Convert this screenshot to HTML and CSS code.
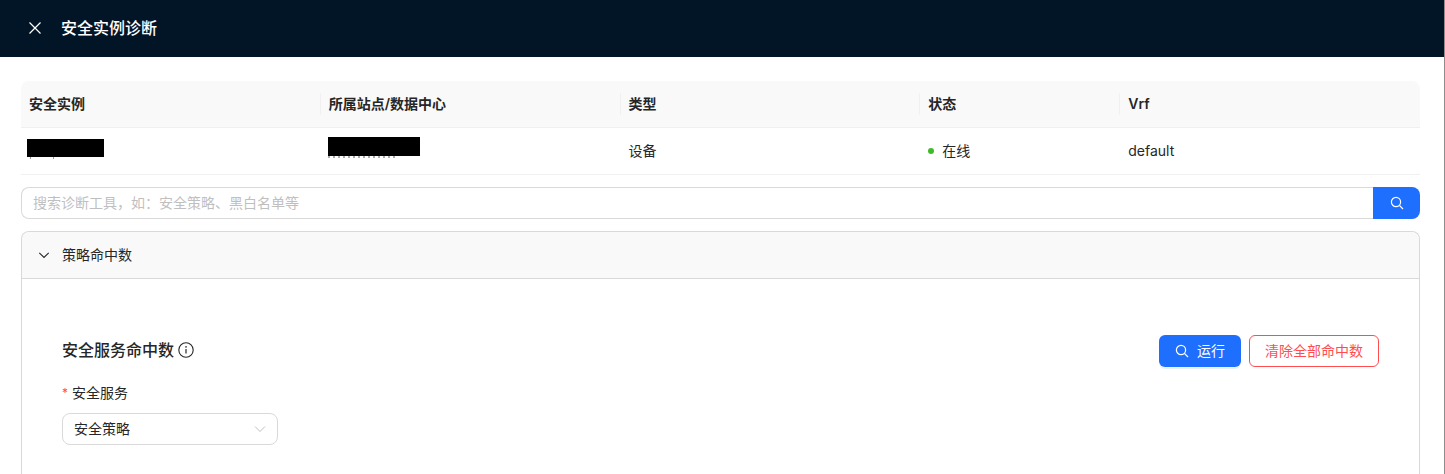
FILE: index.html
```html
<!DOCTYPE html>
<html lang="zh-CN">
<head>
<meta charset="utf-8">
<title>安全实例诊断</title>
<link rel="stylesheet" href="styles.css">
</head>
<body>
<header class="topbar">
  <svg class="close-icon" width="14" height="14" viewBox="0 0 14 14"><path d="M1.5 1.5 12.5 12.5M12.5 1.5 1.5 12.5" stroke="#fff" stroke-width="1.2" fill="none"/></svg>
  <h1 class="topbar-title">安全实例诊断</h1>
</header>
<main class="content">
  <section class="table">
    <div class="row head">
      <div class="cell">安全实例</div>
      <div class="cell sep">所属站点/数据中心</div>
      <div class="cell sep">类型</div>
      <div class="cell sep">状态</div>
      <div class="cell sep">Vrf</div>
    </div>
    <div class="row body-row">
      <div class="cell"><span class="mask mask-a"></span></div>
      <div class="cell"><span class="mask mask-b"></span></div>
      <div class="cell">设备</div>
      <div class="cell status"><span class="dot"></span>在线</div>
      <div class="cell">default</div>
    </div>
  </section>
  <form class="search">
    <div class="search-input">搜索诊断工具，如：安全策略、黑白名单等</div>
    <button type="button" class="search-btn">
      <svg width="14" height="14" viewBox="0 0 14 14"><circle cx="6" cy="6" r="4.6" stroke="#fff" stroke-width="1.2" fill="none"/><path d="M9.4 9.4 13 13" stroke="#fff" stroke-width="1.2" fill="none"/></svg>
    </button>
  </form>
  <section class="panel">
    <div class="panel-head">
      <svg class="chevron" width="12" height="12" viewBox="0 0 12 12"><path d="M1.3 3.8 6 8.5 10.7 3.8" stroke="#262626" stroke-width="1.1" fill="none"/></svg>
      <span>策略命中数</span>
    </div>
    <div class="panel-body">
      <div class="title-row">
        <div class="title">
          <h2>安全服务命中数</h2>
          <svg width="16" height="16" viewBox="0 0 16 16"><circle cx="8" cy="8" r="7.2" stroke="#262626" stroke-width="1.1" fill="none"/><path d="M8 7v4.6" stroke="#262626" stroke-width="1.2"/><circle cx="8" cy="4.9" r=".8" fill="#262626"/></svg>
        </div>
        <div class="actions">
          <button type="button" class="btn primary">
            <svg width="14" height="14" viewBox="0 0 14 14"><circle cx="6" cy="6" r="4.6" stroke="#fff" stroke-width="1.2" fill="none"/><path d="M9.4 9.4 13 13" stroke="#fff" stroke-width="1.2" fill="none"/></svg>
            运行
          </button>
          <button type="button" class="btn danger">清除全部命中数</button>
        </div>
      </div>
      <div class="field">
        <label class="label"><span class="star">*</span>安全服务</label>
        <div class="select">
          <span>安全策略</span>
          <svg width="12" height="12" viewBox="0 0 12 12"><path d="M1 3.5 6 8.5 11 3.5" stroke="#bfbfbf" stroke-width="1" fill="none"/></svg>
        </div>
      </div>
    </div>
  </section>
</main>
</body>
</html>
```
FILE: styles.css
```css
* { box-sizing: border-box; }
html, body { margin: 0; height: 100%; overflow: hidden; }
body {
  background: #fff;
  border-right: 1px solid #8c8c8c;
  color: #262626;
  font-family: Inter, "Noto Sans CJK SC", sans-serif;
  font-size: 14px;
  line-height: 22px;
}
.topbar {
  height: 57px;
  background: #021526;
  display: flex;
  align-items: center;
  padding: 0 0 2px 28px;
  gap: 19px;
}
.topbar-title { margin: 0; color: #fff; font-size: 16px; font-weight: 500; }
.content { padding: 24px 24px 0 21px; }
.table { margin-bottom: 12px; }
.row { display: grid; grid-template-columns: 3fr 3fr 3fr 2fr 3fr; }
.head {
  height: 47px;
  background: #f9f9f9;
  border-bottom: 1px solid #f0f0f0;
  border-radius: 8px 8px 0 0;
  font-weight: 600;
}
.body-row { height: 47px; border-bottom: 1px solid #f0f0f0; }
.cell { display: flex; align-items: center; padding-left: 8px; position: relative; }
.sep::before {
  content: "";
  position: absolute;
  left: -1px;
  top: 12px;
  height: 22px;
  width: 1px;
  background: #f0f0f0;
}
.mask { display: block; background: #000; position: relative; }
.mask::after {
  content: "";
  position: absolute;
  left: 0;
  right: 0;
  top: 100%;
  height: 2px;
}
.mask-a { width: 77px; height: 18px; margin: -7px 0 0 -2px; }
.mask-a::after {
  background:
    linear-gradient(#999, #999) 3px 0 / 1px 2px no-repeat,
    linear-gradient(#999, #999) 26px 0 / 1px 2px no-repeat;
}
.mask-b { width: 92px; height: 19px; margin: -9px 0 0 -1px; }
.mask-b::after {
  right: 25px;
  background: repeating-linear-gradient(90deg, #aaa 0 2px, #fff 2px 5px);
}
.dot { width: 6px; height: 6px; border-radius: 50%; background: #3fba2b; margin-right: 8px; }
.search { display: flex; height: 32px; margin-bottom: 12px; }
.search-input {
  flex: 1;
  border: 1px solid #d9d9d9;
  border-right: 0;
  border-radius: 8px 0 0 8px;
  padding: 4px 11px;
  color: #bfbfbf;
}
.search-btn {
  width: 47px;
  border: 0;
  padding: 0;
  background: #1f6fff;
  border-radius: 0 8px 8px 0;
  display: flex;
  align-items: center;
  justify-content: center;
}
.panel {
  border: 1px solid #d9d9d9;
  border-bottom: 0;
  border-radius: 8px 8px 0 0;
  height: 260px;
}
.panel-head {
  height: 47px;
  background: #f9f9f9;
  border-bottom: 1px solid #d9d9d9;
  border-radius: 8px 8px 0 0;
  display: flex;
  align-items: center;
  padding-left: 16px;
  gap: 12px;
}
.panel-body { padding: 56px 40px 0; }
.title-row { display: flex; justify-content: space-between; align-items: center; height: 32px; }
.title { display: flex; align-items: center; gap: 4px; padding-bottom: 2px; }
.title h2 { margin: 0; font-size: 16px; font-weight: 500; line-height: 24px; }
.actions { display: flex; gap: 8px; }
.btn {
  height: 32px;
  border-radius: 6px;
  font: inherit;
  display: flex;
  align-items: center;
  justify-content: center;
  padding: 0;
}
.primary { width: 82px; gap: 8px; border: 0; background: #1f6fff; color: #fff; box-shadow: 0 2px 0 rgba(5,95,255,.08); }
.danger { width: 130px; border: 1px solid #ff4d4f; background: #fff; color: #ff4d4f; }
.field { margin-top: 15px; }
.label { display: flex; align-items: center; height: 22px; }
.star { color: #ff4d4f; font-size: 12px; margin-right: 4px; }
.select {
  width: 216px;
  height: 32px;
  margin-top: 9px;
  border: 1px solid #d9d9d9;
  border-radius: 8px;
  display: flex;
  align-items: center;
  justify-content: space-between;
  padding: 0 11px;
}
```
